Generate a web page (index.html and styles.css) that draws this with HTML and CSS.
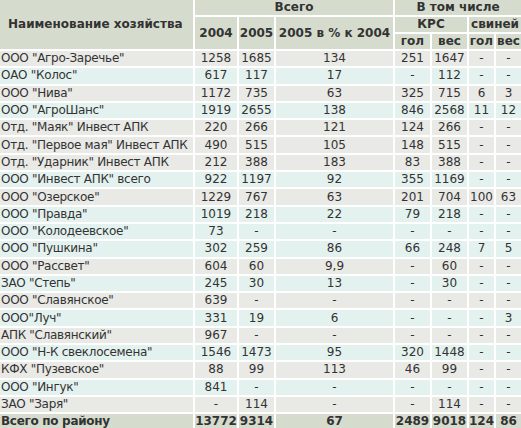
FILE: index.html
```html
<!DOCTYPE html>
<html lang="ru">
<head>
<meta charset="utf-8">
<title>Хозяйства</title>
<link rel="stylesheet" href="styles.css">
</head>
<body>
<div class="frame">
<table class="farms">
  <colgroup>
    <col class="c-name"><col class="c-y4"><col class="c-y5"><col class="c-pct"><col class="c-kg"><col class="c-kv"><col class="c-sg"><col class="c-sv">
  </colgroup>
  <thead>
    <tr>
      <th rowspan="3" class="name-head">Наименование хозяйства</th>
      <th colspan="3">Всего</th>
      <th colspan="4">В том числе</th>
    </tr>
    <tr>
      <th rowspan="2">2004</th>
      <th rowspan="2">2005</th>
      <th rowspan="2">2005 в % к 2004</th>
      <th colspan="2">КРС</th>
      <th colspan="2">свиней</th>
    </tr>
    <tr>
      <th>гол</th><th>вес</th><th>гол</th><th>вес</th>
    </tr>
  </thead>
  <tbody>
    <tr class="g"><td>ООО "Агро-Заречье"</td><td>1258</td><td>1685</td><td>134</td><td>251</td><td>1647</td><td>-</td><td>-</td></tr>
    <tr class="c"><td>ОАО "Колос"</td><td>617</td><td>117</td><td>17</td><td>-</td><td>112</td><td>-</td><td>-</td></tr>
    <tr class="g"><td>ООО "Нива"</td><td>1172</td><td>735</td><td>63</td><td>325</td><td>715</td><td>6</td><td>3</td></tr>
    <tr class="c"><td>ООО "АгроШанс"</td><td>1919</td><td>2655</td><td>138</td><td>846</td><td>2568</td><td>11</td><td>12</td></tr>
    <tr class="g"><td>Отд. "Маяк" Инвест АПК</td><td>220</td><td>266</td><td>121</td><td>124</td><td>266</td><td>-</td><td>-</td></tr>
    <tr class="g"><td>Отд. "Первое мая" Инвест АПК</td><td>490</td><td>515</td><td>105</td><td>148</td><td>515</td><td>-</td><td>-</td></tr>
    <tr class="g"><td>Отд. "Ударник" Инвест АПК</td><td>212</td><td>388</td><td>183</td><td>83</td><td>388</td><td>-</td><td>-</td></tr>
    <tr class="c"><td>ООО "Инвест АПК" всего</td><td>922</td><td>1197</td><td>92</td><td>355</td><td>1169</td><td>-</td><td>-</td></tr>
    <tr class="g"><td>ООО "Озерское"</td><td>1229</td><td>767</td><td>63</td><td>201</td><td>704</td><td>100</td><td>63</td></tr>
    <tr class="c"><td>ООО "Правда"</td><td>1019</td><td>218</td><td>22</td><td>79</td><td>218</td><td>-</td><td>-</td></tr>
    <tr class="c"><td>ООО "Колодеевское"</td><td>73</td><td>-</td><td>-</td><td>-</td><td>-</td><td>-</td><td>-</td></tr>
    <tr class="c"><td>ООО "Пушкина"</td><td>302</td><td>259</td><td>86</td><td>66</td><td>248</td><td>7</td><td>5</td></tr>
    <tr class="g"><td>ООО "Рассвет"</td><td>604</td><td>60</td><td>9,9</td><td>-</td><td>60</td><td>-</td><td>-</td></tr>
    <tr class="c"><td>ЗАО "Степь"</td><td>245</td><td>30</td><td>13</td><td>-</td><td>30</td><td>-</td><td>-</td></tr>
    <tr class="g"><td>ООО "Славянское"</td><td>639</td><td>-</td><td>-</td><td>-</td><td>-</td><td>-</td><td>-</td></tr>
    <tr class="c"><td>ООО"Луч"</td><td>331</td><td>19</td><td>6</td><td>-</td><td>-</td><td>-</td><td>3</td></tr>
    <tr class="g"><td>АПК "Славянский"</td><td>967</td><td>-</td><td>-</td><td>-</td><td>-</td><td>-</td><td>-</td></tr>
    <tr class="c"><td>ООО "Н-К свеклосемена"</td><td>1546</td><td>1473</td><td>95</td><td>320</td><td>1448</td><td>-</td><td>-</td></tr>
    <tr class="g"><td>КФХ "Пузевское"</td><td>88</td><td>99</td><td>113</td><td>46</td><td>99</td><td>-</td><td>-</td></tr>
    <tr class="c"><td>ООО "Ингук"</td><td>841</td><td>-</td><td>-</td><td>-</td><td>-</td><td>-</td><td>-</td></tr>
    <tr class="g"><td>ЗАО "Заря"</td><td>-</td><td>114</td><td>-</td><td>-</td><td>114</td><td>-</td><td>-</td></tr>
    <tr class="total"><td>Всего по району</td><td>13772</td><td>9314</td><td>67</td><td>2489</td><td>9018</td><td>124</td><td>86</td></tr>
  </tbody>
</table>
</div>
</body>
</html>
```
FILE: styles.css
```css
html, body {
  margin: 0;
  padding: 0;
  background: #ffffff;
}
.frame {
  width: 521px;
  height: 428px;
  overflow: hidden;
}
.farms {
  border-collapse: separate;
  border-spacing: 2px;
  margin: -2px 0 0 -2px;
  table-layout: fixed;
  width: 525px;
  font-family: "DejaVu Sans", Verdana, sans-serif;
  font-size: 12px;
  color: #333333;
}
.c-name { width: 193px; }
.c-y4 { width: 42px; }
.c-y5 { width: 35px; }
.c-pct { width: 117px; }
.c-kg { width: 35px; }
.c-kv { width: 35px; }
.c-sg { width: 25px; }
.c-sv { width: 25px; }
.farms th, .farms td {
  padding: 0;
  height: 15px;
  line-height: 15px;
  text-align: center;
  white-space: nowrap;
  overflow: visible;
}
.farms td { height: 15.3px; }
.farms th {
  background: #d6dccd;
  font-weight: bold;
  color: #333333;
}
.farms th.name-head {
  padding-left: 8px;
  text-align: left;
}
.farms td:first-child {
  text-align: left;
  padding-left: 1px;
  letter-spacing: -0.3px;
}
.farms tr.g td { background: #e9e9e6; }
.farms tr.c td { background: #e4f2ef; }
.farms tr.total td {
  background: #d6dccd;
  font-weight: bold;
}
```
